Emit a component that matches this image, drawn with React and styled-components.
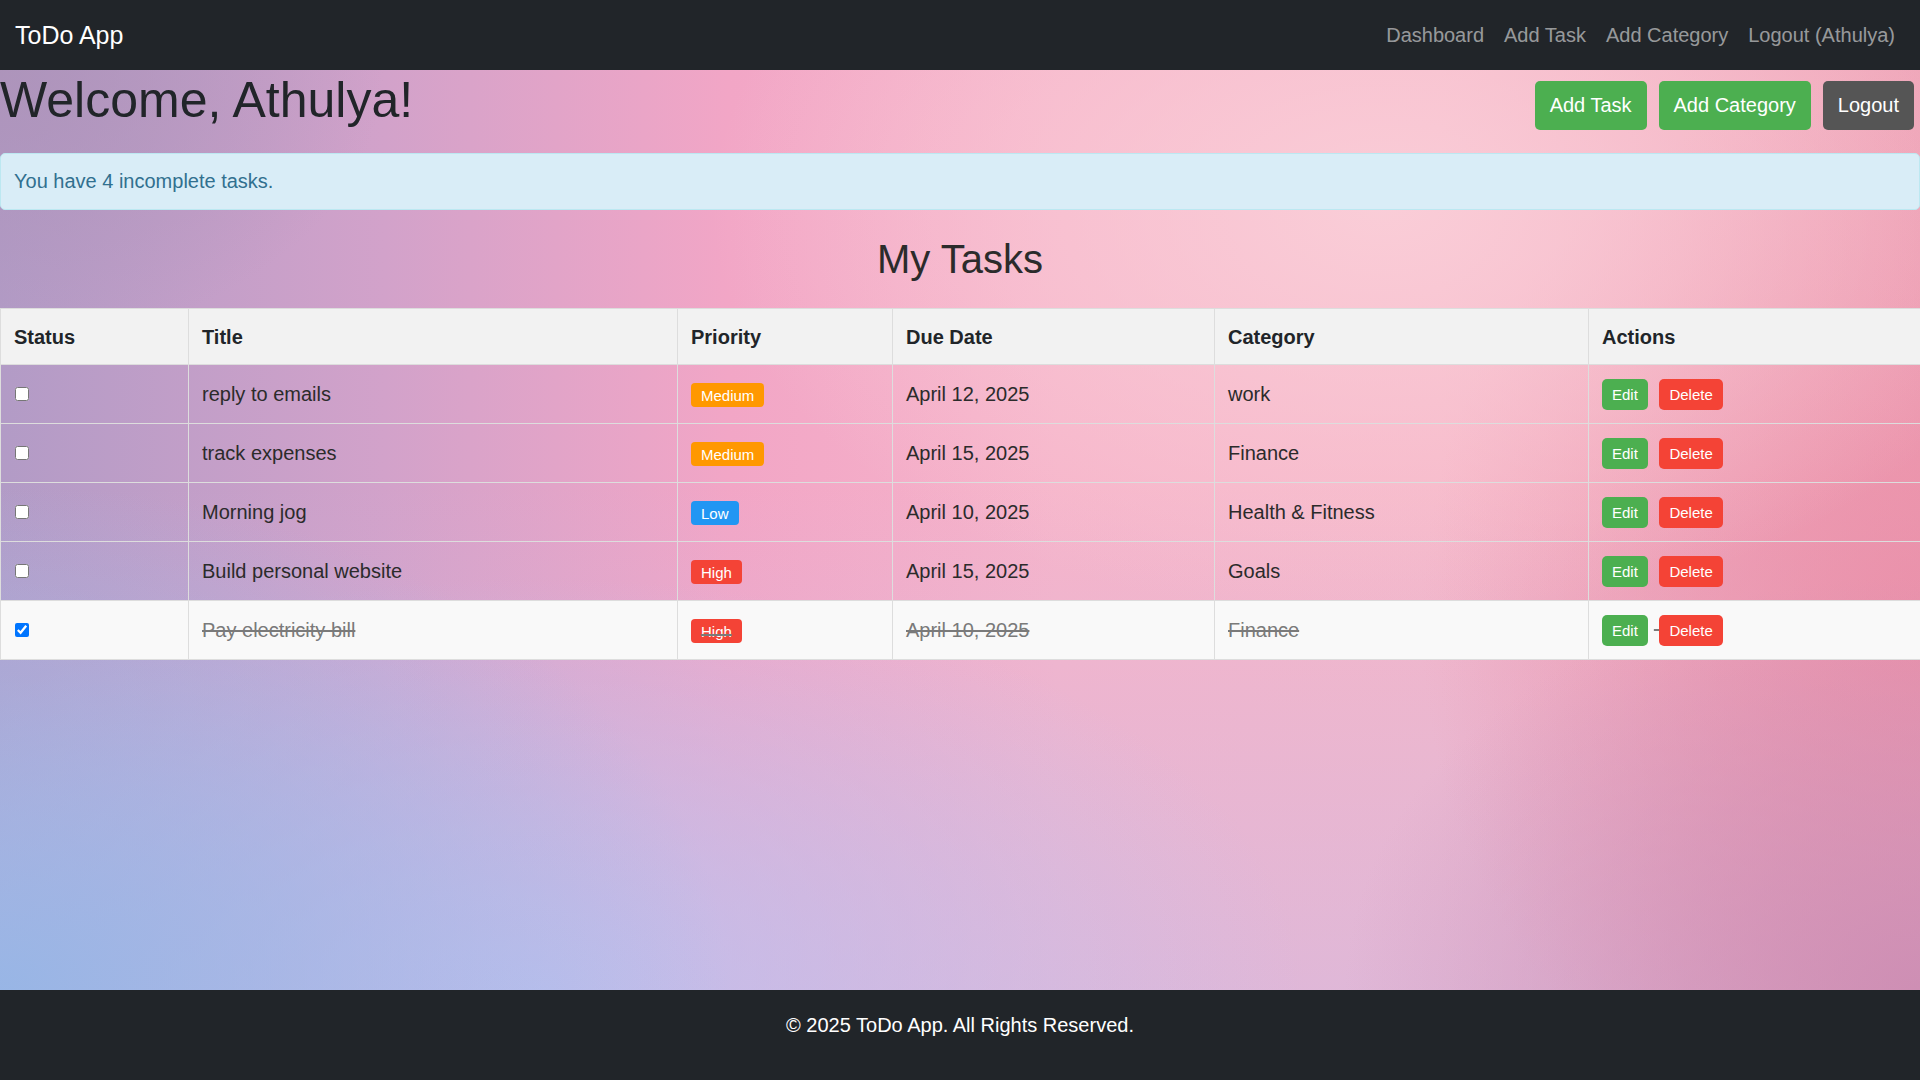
import React from 'react';
import styled, { createGlobalStyle } from 'styled-components';

const tasks = [
  { id: 1, title: 'reply to emails', priority: 'Medium', due: 'April 12, 2025', category: 'work', done: false },
  { id: 2, title: 'track expenses', priority: 'Medium', due: 'April 15, 2025', category: 'Finance', done: false },
  { id: 3, title: 'Morning jog', priority: 'Low', due: 'April 10, 2025', category: 'Health & Fitness', done: false },
  { id: 4, title: 'Build personal website', priority: 'High', due: 'April 15, 2025', category: 'Goals', done: false },
  { id: 5, title: 'Pay electricity bill', priority: 'High', due: 'April 10, 2025', category: 'Finance', done: true },
];

const columns = [
  { label: 'Status', width: 188 },
  { label: 'Title', width: 489 },
  { label: 'Priority', width: 215 },
  { label: 'Due Date', width: 322 },
  { label: 'Category', width: 374 },
  { label: 'Actions', width: 332 },
];

const priorityColors = {
  High: '#f44336',
  Medium: '#ff9800',
  Low: '#2196f3',
};

function App() {
  const incomplete = tasks.filter((t) => !t.done).length;

  return (
    <>
      <GlobalStyle />
      <Page>
        <Navbar>
          <Brand>ToDo App</Brand>
          <NavLinks>
            <NavLink>Dashboard</NavLink>
            <NavLink>Add Task</NavLink>
            <NavLink>Add Category</NavLink>
            <NavLink>Logout (Athulya)</NavLink>
          </NavLinks>
        </Navbar>

        <Main>
          <HeaderRow>
            <Welcome>Welcome, Athulya!</Welcome>
            <ButtonGroup>
              <ActionButton>Add Task</ActionButton>
              <ActionButton>Add Category</ActionButton>
              <ActionButton $variant="dark">Logout</ActionButton>
            </ButtonGroup>
          </HeaderRow>

          <Alert>You have {incomplete} incomplete tasks.</Alert>

          <SectionTitle>My Tasks</SectionTitle>

          <TaskTable>
            <thead>
              <tr>
                {columns.map((c) => (
                  <HeadCell key={c.label} $width={c.width}>
                    {c.label}
                  </HeadCell>
                ))}
              </tr>
            </thead>
            <tbody>
              {tasks.map((task) => (
                <TaskRow key={task.id} $done={task.done}>
                  <Cell>
                    <Checkbox type="checkbox" checked={task.done} readOnly />
                  </Cell>
                  <Cell>{task.title}</Cell>
                  <Cell>
                    <Badge $color={priorityColors[task.priority]}>{task.priority}</Badge>
                  </Cell>
                  <Cell>{task.due}</Cell>
                  <Cell>{task.category}</Cell>
                  <Cell>
                    <SmallButton $color="#4caf50">Edit</SmallButton>{' '}
                    <SmallButton $color="#f44336">Delete</SmallButton>
                  </Cell>
                </TaskRow>
              ))}
            </tbody>
          </TaskTable>
        </Main>

        <Footer>
          <p>© 2025 ToDo App. All Rights Reserved.</p>
        </Footer>
      </Page>
    </>
  );
}

const GlobalStyle = createGlobalStyle`
  *, *::before, *::after {
    box-sizing: border-box;
  }

  body {
    margin: 0;
    font-family: "Liberation Sans", Arial, sans-serif;
    font-size: 20px;
    line-height: 30px;
    color: #212529;
  }
`;

const Page = styled.div`
  display: flex;
  flex-direction: column;
  min-height: 100vh;
`;

const Navbar = styled.nav`
  height: 70px;
  flex-shrink: 0;
  display: flex;
  align-items: center;
  justify-content: space-between;
  padding: 0 15px;
  background: #212529;
`;

const Brand = styled.span`
  color: #fff;
  font-size: 25px;
`;

const NavLinks = styled.div`
  display: flex;
`;

const NavLink = styled.span`
  padding: 0 10px;
  color: rgba(255, 255, 255, 0.55);
  font-size: 20px;
  cursor: pointer;
`;

const Main = styled.main`
  flex: 1;
  background:
    radial-gradient(ellipse 38% 55% at 0% 100%, rgba(150, 182, 230, 0.95), rgba(150, 182, 230, 0) 100%),
    radial-gradient(ellipse 40% 45% at 28% 100%, rgba(188, 194, 240, 0.85), rgba(188, 194, 240, 0) 100%),
    radial-gradient(ellipse 35% 45% at 72% 15%, rgba(250, 206, 216, 0.95), rgba(250, 206, 216, 0) 100%),
    radial-gradient(ellipse 30% 45% at 100% 100%, rgba(204, 140, 178, 0.9), rgba(204, 140, 178, 0) 100%),
    radial-gradient(ellipse 26% 60% at 100% 60%, rgba(234, 140, 166, 0.8), rgba(234, 140, 166, 0) 100%),
    radial-gradient(ellipse 20% 30% at 0% 0%, rgba(172, 146, 184, 0.8), rgba(172, 146, 184, 0) 100%),
    linear-gradient(180deg, rgba(205, 185, 228, 0) 45%, rgba(205, 185, 228, 0.55) 100%),
    linear-gradient(90deg, #b29bc6 0%, #d2a2ca 20%, #f2a6c6 38%, #f6b4ca 55%, #f6b6c8 75%, #eea2b6 100%);
`;

const HeaderRow = styled.div`
  display: flex;
  justify-content: space-between;
  align-items: flex-start;
  padding-right: 6px;
`;

const Welcome = styled.h1`
  margin: 0;
  font-size: 50px;
  line-height: 60px;
  font-weight: 400;
  color: #212529;
`;

const ButtonGroup = styled.div`
  display: flex;
  gap: 12px;
  margin-top: 11px;
`;

const ActionButton = styled.button`
  padding: 10px 15px;
  border: none;
  border-radius: 5px;
  font-family: inherit;
  font-size: 20px;
  line-height: 29px;
  color: #fff;
  background: ${(p) => (p.$variant === 'dark' ? '#555555' : '#4caf50')};
  cursor: pointer;
`;

const Alert = styled.div`
  margin-top: 23px;
  padding: 12px 13px 13px;
  border: 1px solid #bce8f1;
  border-radius: 5px;
  background: #d9edf7;
  color: #31708f;
`;

const SectionTitle = styled.h2`
  margin: 25px 0;
  text-align: center;
  font-size: 40px;
  line-height: 48px;
  font-weight: 400;
  color: #2b2b2b;
`;

const TaskTable = styled.table`
  width: 100%;
  table-layout: fixed;
  border-collapse: collapse;
  border: 1px solid #ddd;
`;

const HeadCell = styled.th`
  width: ${(p) => p.$width}px;
  height: 56px;
  padding: 0 13px;
  text-align: left;
  vertical-align: middle;
  font-weight: 700;
  background: #f2f2f2;
  border: 1px solid #ddd;
`;

const TaskRow = styled.tr`
  background: ${(p) => (p.$done ? '#f9f9f9' : 'transparent')};
  color: ${(p) => (p.$done ? '#7a7a7a' : '#2b2b2b')};
  text-decoration: ${(p) => (p.$done ? 'line-through' : 'none')};
`;

const Cell = styled.td`
  height: 59px;
  padding: 0 13px;
  vertical-align: middle;
  border: 1px solid #ddd;
`;

const Checkbox = styled.input`
  width: 14px;
  height: 14px;
  margin: 0 0 1px 1px;
  vertical-align: baseline;
`;

const Badge = styled.span`
  padding: 3.5px 10px;
  border-radius: 4px;
  font-size: 15px;
  color: #fff;
  background: ${(p) => p.$color};
`;

const SmallButton = styled.button`
  display: inline-block;
  padding: 4px 10px;
  border: none;
  border-radius: 5px;
  font-family: inherit;
  font-size: 15px;
  line-height: 23px;
  color: #fff;
  background: ${(p) => p.$color};
  cursor: pointer;

  &:first-child {
    margin-right: 6px;
  }
`;

const Footer = styled.footer`
  flex-shrink: 0;
  padding: 20px 0 40px;
  background: #212529;
  color: #fff;
  text-align: center;

  p {
    margin: 0;
  }
`;

export default App;
